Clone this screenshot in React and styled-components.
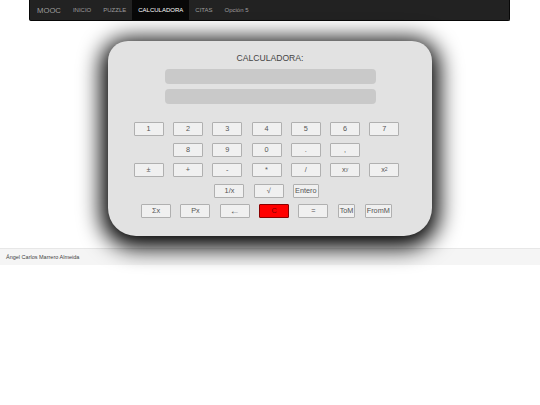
import React from "react";
import styled, { createGlobalStyle } from "styled-components";

const Global = createGlobalStyle`
  html, body { margin: 0; padding: 0; background: #fff; }
  body { font-family: "Liberation Sans", Arial, sans-serif; color: #333; }
`;

const Page = styled.div`
  width: 540px;
  min-height: 405px;
  display: flex;
  flex-direction: column;
`;

const Navbar = styled.nav`
  margin: 0 30px 0 29px;
  height: 21px;
  background: #222;
  border: 1px solid #080808;
  border-top: none;
  border-radius: 0 0 2px 2px;
  display: flex;
  align-items: stretch;
  box-sizing: border-box;
  padding-left: 7px;
`;

const Brand = styled.span`
  font-size: 7.7px;
  color: #9d9d9d;
  display: flex;
  align-items: center;
  padding-right: 6px;
`;

const NavLink = styled.span`
  font-size: 6px;
  color: ${(p) => (p.$active ? "#fff" : "#9d9d9d")};
  background: ${(p) => (p.$active ? "#080808" : "transparent")};
  text-transform: ${(p) => (p.$plain ? "none" : "uppercase")};
  display: flex;
  align-items: center;
  padding: 0 6px;
`;

const Main = styled.main`
  padding-top: 20px;
  display: flex;
  justify-content: center;
`;

const Card = styled.section`
  position: relative;
  z-index: 1;
  width: 324px;
  height: 195px;
  box-sizing: border-box;
  background: #e2e2e2;
  border-radius: 20px 20px 28px 28px;
  box-shadow: 0 5px 22px 7px rgba(0, 0, 0, 1);
  padding-top: 12px;
  display: flex;
  flex-direction: column;
  align-items: center;
`;

const Title = styled.div`
  font-size: 8.6px;
  line-height: 10px;
  color: #444;
  margin-bottom: 6px;
`;

const Display = styled.div`
  width: 211px;
  height: 15px;
  background: #c9c9c9;
  border-radius: 4px;
  margin-bottom: 5px;
`;

const Keys = styled.div`
  margin-top: 13px;
  display: flex;
  flex-direction: column;
  gap: 6.5px;
  padding-right: 7px;
`;

const Row = styled.div`
  display: flex;
  justify-content: center;
  gap: 9.3px;
  height: 14px;
`;

const Key = styled.button`
  font-family: "Liberation Sans", Arial, sans-serif;
  font-size: ${(p) => (p.$big ? "10px" : "7.3px")};
  color: ${(p) => (p.$red ? "#7a0000" : "#555")};
  width: ${(p) => (p.$auto ? "auto" : "30px")};
  height: 14px;
  padding: 0 1px;
  margin: 0;
  box-sizing: border-box;
  background: ${(p) => (p.$red ? "#ff0000" : "#f0f0f0")};
  border: 1px solid ${(p) => (p.$red ? "#8a0000" : "#b0b0b0")};
  border-radius: 1px;
  display: flex;
  align-items: center;
  justify-content: center;
  line-height: 1;
  sup {
    font-size: 5px;
    line-height: 0;
    position: relative;
    top: -1px;
  }
`;

const Footer = styled.footer`
  margin-top: 12px;
  height: 17px;
  background: #f5f5f5;
  border-top: 1px solid #e7e7e7;
  box-sizing: border-box;
  display: flex;
  align-items: center;
  padding-left: 6px;
  font-size: 5.5px;
  color: #444;
`;

const rows = [
  [{ t: "1" }, { t: "2" }, { t: "3" }, { t: "4" }, { t: "5" }, { t: "6" }, { t: "7" }],
  [{ t: "8" }, { t: "9" }, { t: "0" }, { t: "." }, { t: "," }],
  [
    { t: "±" },
    { t: "+" },
    { t: "-" },
    { t: "*" },
    { t: "/" },
    { t: "x", sup: "y" },
    { t: "x", sup: "2" },
  ],
  [{ t: "1/x" }, { t: "√" }, { t: "Entero", auto: true }],
  [
    { t: "Σx" },
    { t: "Px" },
    { t: "←", big: true },
    { t: "C", red: true },
    { t: "=" },
    { t: "ToM", auto: true },
    { t: "FromM", auto: true },
  ],
];

export default function App() {
  return (
    <Page>
      <Global />
      <Navbar>
        <Brand>MOOC</Brand>
        <NavLink>Inicio</NavLink>
        <NavLink>Puzzle</NavLink>
        <NavLink $active>Calculadora</NavLink>
        <NavLink>Citas</NavLink>
        <NavLink $plain>Opción 5</NavLink>
      </Navbar>
      <Main>
        <Card>
          <Title>CALCULADORA:</Title>
          <Display />
          <Display />
          <Keys>
            {rows.map((r, i) => (
              <Row key={i}>
                {r.map((k, j) => (
                  <Key key={j} $auto={k.auto} $red={k.red} $big={k.big}>
                    {k.t}
                    {k.sup && <sup>{k.sup}</sup>}
                  </Key>
                ))}
              </Row>
            ))}
          </Keys>
        </Card>
      </Main>
      <Footer>Ángel Carlos Marrero Almeida</Footer>
    </Page>
  );
}
